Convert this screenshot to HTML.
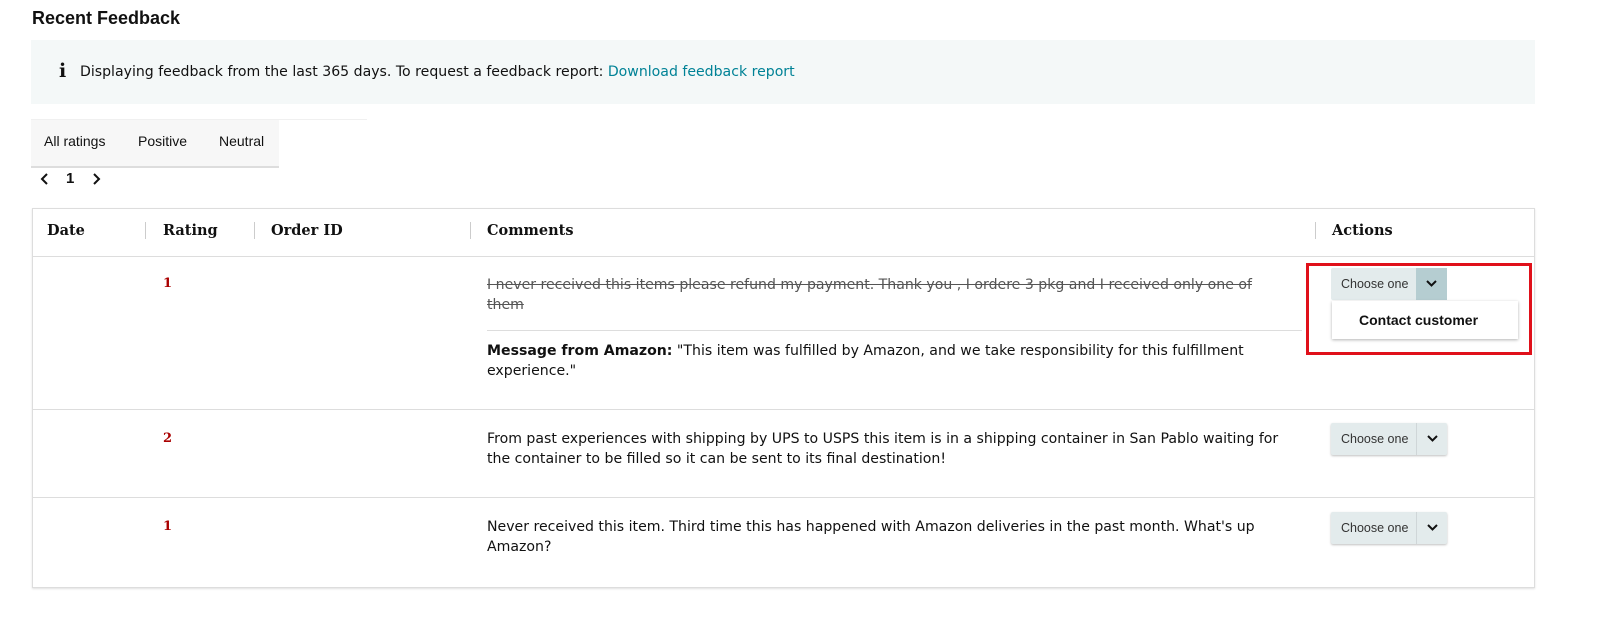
<!DOCTYPE html>
<html><head><style>
*{margin:0;padding:0;box-sizing:border-box}
body{width:1600px;height:629px;background:#fff;position:relative;font-family:"Liberation Sans",sans-serif;color:#111;overflow:hidden}
.a{position:absolute;white-space:nowrap}
.c{font-family:"DejaVu Sans",sans-serif;font-size:14.1px;line-height:20px;color:#111}
.h{font-family:"DejaVu Serif",serif;font-weight:bold;font-size:14.5px;top:222px}
.sep{position:absolute;top:222px;width:1px;height:17px;background:#ccc}
.r{font-family:"DejaVu Serif",serif;font-weight:bold;font-size:13px;color:#a00}
.btn{position:absolute;left:1331px;width:116px;height:32px;background:#e3ebec;border-radius:2px;box-shadow:0 1px 2px rgba(0,0,0,.25);font-size:12.5px;color:#333}
.btn span{position:absolute;left:10px;top:9px}
.btn i{position:absolute;left:85px;top:0;width:31px;height:32px;border-left:1px solid #cfd6d8}
.btn i svg{position:absolute;left:10px;top:12px}
.line{position:absolute;left:33px;width:1501px;height:1px;background:#ddd}
</style></head><body>
<div class="a" style="left:32px;top:8px;font-size:18px;font-weight:bold">Recent Feedback</div>
<div style="position:absolute;left:31px;top:40px;width:1504px;height:64px;background:#f4f8f8"></div>
<div class="a" style="left:59px;top:60px;font-family:'DejaVu Serif',serif;font-weight:bold;font-size:19px">i</div>
<div class="a c" style="left:80px;top:62px">Displaying feedback from the last 365 days. To request a feedback report: <span style="color:#008296">Download feedback report</span></div>
<div style="position:absolute;left:31px;top:119px;width:336px;height:1px;background:#f0f0f0"></div>
<div style="position:absolute;left:31px;top:120px;width:248px;height:48px;background:#f7f7f7;border-bottom:2px solid #ddd"></div>
<div class="a" style="left:44px;top:133px;font-size:14px">All ratings</div>
<div class="a" style="left:138px;top:133px;font-size:14px">Positive</div>
<div class="a" style="left:219px;top:133px;font-size:14px">Neutral</div>
<svg class="a" style="left:40px;top:173px" width="10" height="12"><path d="M7 1L2 6l5 5" stroke="#111" stroke-width="2" fill="none"/></svg>
<div class="a" style="left:66px;top:170px;font-size:15px;font-weight:bold">1</div>
<svg class="a" style="left:91px;top:173px" width="10" height="12"><path d="M3 1l5 5-5 5" stroke="#111" stroke-width="2" fill="none"/></svg>

<div style="position:absolute;left:32px;top:208px;width:1503px;height:380px;border:1px solid #ddd;box-shadow:0 1px 2px rgba(0,0,0,.12)"></div>
<div class="a h" style="left:47px">Date</div>
<div class="sep" style="left:145px"></div>
<div class="a h" style="left:163px">Rating</div>
<div class="sep" style="left:254px"></div>
<div class="a h" style="left:271px">Order ID</div>
<div class="sep" style="left:470px"></div>
<div class="a h" style="left:487px">Comments</div>
<div class="sep" style="left:1315px"></div>
<div class="a h" style="left:1332px">Actions</div>
<div class="line" style="top:256px"></div>
<div class="line" style="top:409px"></div>
<div class="line" style="top:497px"></div>

<div class="a r" style="left:163px;top:276px">1</div>
<div class="a c" style="left:487px;top:275px;text-decoration:line-through;color:#555">I never received this items please refund my payment. Thank you , I ordere 3 pkg and I received only one of<br>them</div>
<div style="position:absolute;left:487px;top:330px;width:815px;height:1px;background:#ddd"></div>
<div class="a c" style="left:487px;top:341px"><b>Message from Amazon:</b> "This item was fulfilled by Amazon, and we take responsibility for this fulfillment<br>experience."</div>

<div class="a r" style="left:163px;top:431px">2</div>
<div class="a c" style="left:487px;top:429px">From past experiences with shipping by UPS to USPS this item is in a shipping container in San Pablo waiting for<br>the container to be filled so it can be sent to its final destination!</div>

<div class="a r" style="left:163px;top:519px">1</div>
<div class="a c" style="left:487px;top:517px">Never received this item. Third time this has happened with Amazon deliveries in the past month. What's up<br>Amazon?</div>

<div class="btn" style="top:268px;box-shadow:none"><span>Choose one</span><i style="background:#b5cdd1;border:none"><svg width="11" height="8"><path d="M1 1l4.5 4.5L10 1" stroke="#111" stroke-width="2" fill="none"/></svg></i></div>
<div style="position:absolute;left:1332px;top:301px;width:186px;height:38px;background:#fff;box-shadow:0 1px 3px rgba(0,0,0,.3)"></div>
<div class="a" style="left:1359px;top:312px;font-size:14px;font-weight:bold">Contact customer</div>
<div style="position:absolute;left:1306px;top:263px;width:226px;height:92px;border:3px solid #e0101a"></div>

<div class="btn" style="top:423px"><span>Choose one</span><i><svg width="11" height="8"><path d="M1 1l4.5 4.5L10 1" stroke="#111" stroke-width="2" fill="none"/></svg></i></div>
<div class="btn" style="top:512px"><span>Choose one</span><i><svg width="11" height="8"><path d="M1 1l4.5 4.5L10 1" stroke="#111" stroke-width="2" fill="none"/></svg></i></div>
</body></html>
